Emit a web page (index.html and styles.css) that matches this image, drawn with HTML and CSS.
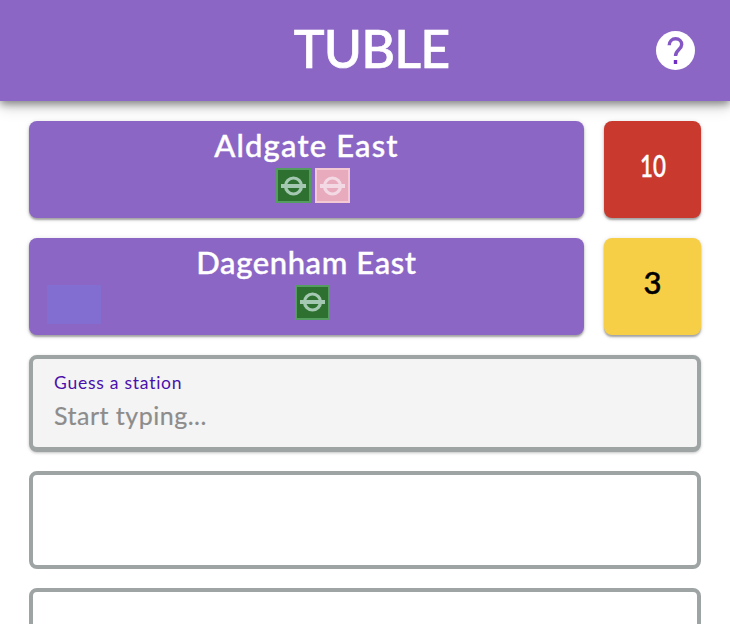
FILE: index.html
```html
<!DOCTYPE html>
<html lang="en">
<head>
    <meta charset="UTF-8">
    <meta name="viewport" content="width=device-width, initial-scale=1.0">
    <title>Tuble</title>
    <link rel="stylesheet" href="styles.css">
</head>
<body>

    <svg class="sprite" aria-hidden="true">
        <symbol id="roundel" viewBox="0 0 25 20">
            <circle cx="12.5" cy="10" r="8" fill="none" stroke="currentColor" stroke-width="3.2"/>
            <rect x="0" y="8" width="25" height="4" fill="currentColor"/>
        </symbol>
    </svg>

    <header class="header">
        <h1 class="title">TUBLE</h1>
        <button class="help" aria-label="Help">
            <svg viewBox="0 0 39 39">
                <circle cx="19.5" cy="19.5" r="19.5" fill="#fff"/>
                <path d="M13.2 14.3C13.2 10.5 16 7.8 19.6 7.8C23.2 7.8 25.7 10.4 25.7 13.6C25.7 18.4 19.5 18.8 19.5 25" fill="none" stroke="#8457c4" stroke-width="3.4"/>
                <rect x="17.8" y="29" width="3.4" height="4" fill="#6f2fc4"/>
            </svg>
        </button>
    </header>

    <main class="board">

        <div class="guess">
            <div class="station">
                <span class="name name-aldgate">Aldgate East</span>
                <div class="lines">
                    <span class="line district"><svg><use href="#roundel"/></svg></span>
                    <span class="line hammersmith"><svg><use href="#roundel"/></svg></span>
                </div>
            </div>
            <div class="score red"><span>10</span></div>
        </div>

        <div class="guess">
            <div class="station tinted">
                <span class="name name-dagenham">Dagenham East</span>
                <div class="lines">
                    <span class="line district"><svg><use href="#roundel"/></svg></span>
                </div>
            </div>
            <div class="score yellow"><span>3</span></div>
        </div>

        <label class="field">
            <span class="field-label">Guess a station</span>
            <input class="field-input" type="text" placeholder="Start typing...">
        </label>

        <div class="empty"></div>
        <div class="empty"></div>

    </main>

</body>
</html>
```
FILE: styles.css
```css
*{box-sizing: border-box;}
body{margin: 0; height: 624px; overflow: hidden; background: #fff; font-family: Lato, "Liberation Sans", sans-serif;}

.sprite{display: none;}

.header{display: grid; grid-template-columns: 1fr auto 1fr; align-items: center; height: 101px; padding: 0 35px 0 48px; background: #8c66c5; color: #fff; box-shadow: 0 3px 8px rgba(0,0,0,.42), 0 7px 14px rgba(0,0,0,.14);}
.title{grid-column: 2; margin: 0; font-size: 52px; line-height: 97px; height: 101px; font-weight: 500; letter-spacing: -.8px; -webkit-text-stroke: .7px;}
.help{justify-self: end; width: 39px; height: 39px; padding: 0; border: 0; background: none;}
.help svg{display: block; width: 39px; height: 39px;}

.board{display: flex; flex-direction: column; gap: 19.5px; height: 523px; padding: 20px 29px 0; overflow: hidden;}

.guess{display: grid; flex: none; grid-template-columns: 1fr 97px; gap: 20px; height: 97.3px;}
.station, .score{border-radius: 8px; box-shadow: 0 2px 2px rgba(0,0,0,.3), 0 1px 5px rgba(0,0,0,.15);}
.station{display: flex; flex-direction: column; align-items: center; padding-top: 4px; background: #8c66c5; color: #fff;}
.tinted{background: linear-gradient(#826dd0, #826dd0) 18px 47px / 54px 39px no-repeat #8c66c5;}
.name{font-size: 31px; line-height: 40px; font-weight: 500; white-space: nowrap; -webkit-text-stroke: .4px;}
.name-aldgate{letter-spacing: 1.15px;}
.name-dagenham{letter-spacing: .6px;}

.lines{display: flex; gap: 4px; margin-top: 3px; padding-left: 12px;}
.line{display: flex; align-items: center; justify-content: center; width: 35px; height: 35px; border: 2px solid;}
.line svg{width: 25px; height: 20px;}
.district{background: #2d702f; border-color: #559c60; color: #a5c8b2;}
.hammersmith{background: #e8aabd; border-color: #f5c9d3; color: #f3d9e3;}

.score{display: flex; justify-content: center; font-size: 31px; line-height: 88px; font-weight: 500; -webkit-text-stroke: .5px;}
.red{background: #c9392e; color: #fff;}
.red span{transform: scaleX(.72);}
.yellow{background: #f7cf46; color: #000;}

.field{display: flex; flex: none; flex-direction: column; height: 97.3px; padding: 13px 21px; border: 4px solid #9ea3a4; border-bottom-width: 5px; border-radius: 8px; background: #f4f4f4; box-shadow: 0 1px 3px rgba(0,0,0,.25);}
.field-label{font-size: 17.5px; line-height: 22px; letter-spacing: .75px; color: #4a10ac;}
.field-input{height: 34px; margin-top: 4px; padding: 0; border: 0; outline: 0; background: none; font: 25px/34px Lato, "Liberation Sans", sans-serif; letter-spacing: .5px;}
.field-input::placeholder{color: #8c8c8c; opacity: 1; -webkit-text-stroke: .2px;}

.empty{flex: none; height: 97.3px; border: 4px solid #9ea3a4; border-radius: 8px; background: #fff;}
```
